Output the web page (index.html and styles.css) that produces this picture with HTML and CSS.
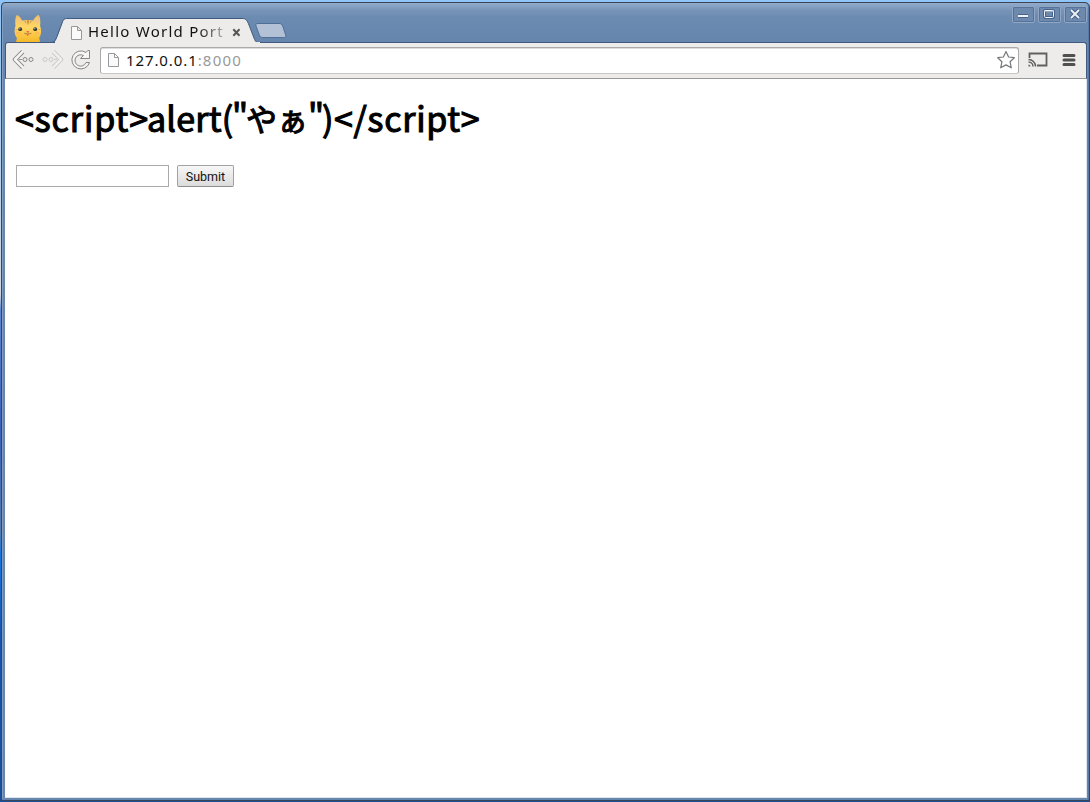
FILE: index.html
```html
<!DOCTYPE html>
<html lang="ja">
<head>
<meta charset="utf-8">
<title>Hello World Portal</title>
<link rel="stylesheet" href="styles.css">
</head>
<body>
<div class="window">
  <header class="titlebar">
    <svg class="cat" width="28" height="28" viewBox="0 0 28 28">
      <defs><linearGradient id="fur" x2="0" y2="1"><stop stop-color="#efbd68"/><stop offset=".45" stop-color="#ffd765"/><stop offset="1" stop-color="#f5b928"/></linearGradient></defs>
      <path d="M1.500 12C1 7 1.400 2.500 2.800 1c2 .2 4.200 3.300 5.400 5.500 3-.8 8-.8 11 0C20.500 4 22.700 1.200 24.700 1c1.700 2 1.900 7 1.400 11 1.700 4.500 1.200 9-1 12l1 4H2l1-4C.2 20.500.1 16 1.500 12z" fill="url(#fur)"/>
      <path d="M3 3l4 4-4 2zM24.500 3l-4.500 4 4.500 2z" fill="#f4c38a"/>
      <path d="M10.500 7h1l1 3zM13 6.500h2l-1 5zM17.500 7h-1l-1 3z" fill="#bd7e2e"/>
      <path d="M1.500 15l2.500.5-2.500.5zM26.300 15l-2.500.5 2.500.5z" fill="#d79a3b"/>
      <ellipse cx="4.200" cy="19" rx="2.300" ry="1.300" fill="#ffb95b"/><ellipse cx="23" cy="19" rx="2.300" ry="1.300" fill="#ffb95b"/>
      <circle cx="6.200" cy="15.200" r="1.900" fill="#303235"/><circle cx="21.200" cy="15.200" r="1.900" fill="#303235"/>
      <circle cx="5.800" cy="14.700" r=".6" fill="#d5dadd"/><circle cx="20.800" cy="14.700" r=".6" fill="#d5dadd"/>
      <path d="M12.200 17h3.200l-1.600 1.700z" fill="#f26268"/><path d="M10.300 19.200c1.400 1 2.700.6 3.500-.5 1 1.100 2.300 1.500 3.500.5" fill="none" stroke="#9c5d28" stroke-width=".8"/><ellipse cx="13.700" cy="20.800" rx="1" ry="1.100" fill="#e9685c"/>
    </svg>
    <div class="tab">
      <svg class="tab-shape" width="210" height="26" viewBox="0 0 210 26"><path class="tab-fill" d="M0 26C4 25 4.500 23 6 19.500L11 6C12.500 2 13 .5 17 .5H191C195 .5 196 2 198 7l5 13c1.500 4 2 5 7 6z"/><path class="tab-edge" d="M0 24.500C4 24 4.500 22 6 18.500L11 5C12.500 1 13 .5 17 .5H191C195 .5 196 2 198 7l5 13c1.500 4 2 4.500 7 4.500"/></svg>
      <div class="tab-content">
        <svg class="page" width="13" height="16" viewBox="0 0 13 16"><path d="M1.500 1.500h6l4 4v9h-10z M7.500 1.500v4h4"/></svg>
        <span class="tab-title">Hello World Port</span>
        <svg class="tab-close" width="9" height="9" viewBox="0 0 9 9"><path d="M1.300 1.300l6.200 6.400M7.500 1.300L1.300 7.700"/></svg>
      </div>
    </div>
    <svg class="newtab" width="34" height="18" viewBox="0 0 34 18"><path d="M4 1.500h21c2 0 3 1 3.700 2.500l3 9c.7 2-.1 2.500-2 2.500H9c-2 0-3-.8-3.700-2.500L2 4c-.7-2 .2-2.500 2-2.500z"/></svg>
    <div class="controls">
      <span class="control"><svg width="22" height="16" viewBox="0 0 22 16"><path d="M6 10h10" stroke-width="4"/><path class="mark" d="M6 10h10" stroke-width="2"/></svg></span>
      <span class="control"><svg width="22" height="16" viewBox="0 0 22 16"><rect x="6.500" y="4.500" width="9" height="7" rx="1" stroke-width="3"/><rect class="mark" x="6.500" y="4.500" width="9" height="7" rx="1"/><path class="mark" d="M6 5h10"/></svg></span>
      <span class="control"><svg width="22" height="16" viewBox="0 0 22 16"><path d="M7 4l8 8M15 4l-8 8" stroke-width="4"/><path class="mark" d="M7 4l8 8M15 4l-8 8" stroke-width="1.800"/></svg></span>
    </div>
  </header>
  <nav class="toolbar">
    <svg class="nav-icon back" width="24" height="24" viewBox="0 0 24 24"><g id="arrow" stroke-linejoin="round"><path d="M10.800 3.600L3 11.500l7.800 7.900" stroke="#868686" stroke-width="4.400"/><path d="M11 3.400L3 11.500l8 8.100" stroke="#f5f5f5" stroke-width="2.600"/><circle cx="13" cy="11.500" r="2" stroke="#888"/><circle cx="19" cy="11.500" r="2" stroke="#888"/><path d="M7 11.500h3" stroke="#999"/></g></svg>
    <svg class="nav-icon forward" width="24" height="24" viewBox="0 0 24 24"><use href="#arrow" transform="matrix(-1 0 0 1 24 0)"/></svg>
    <svg class="nav-icon reload" width="24" height="24" viewBox="0 0 24 24"><path d="M17 4.500A9 9 0 1 0 20.500 14.500H17A5.700 5.700 0 1 1 14.500 7.500l-3 3h9v-8h-1.800z" fill="#f5f5f5" stroke="#868686"/></svg>
    <div class="omnibox">
      <svg class="page" width="13" height="16" viewBox="0 0 13 16"><path d="M1.500 1.500h6l4 4v9h-10z M7.500 1.500v4h4"/></svg>
      <span class="url">127.0.0.1<span class="port">:8000</span></span>
      <svg class="star" width="20" height="20" viewBox="0 0 20 20"><path stroke-linejoin="round" stroke-width="1.200" d="M10 1.500l2.600 5.500 5.700.7-4.200 4.100 1.200 6-5.300-2.900-5.300 2.900 1.200-6-4.200-4.100 5.700-.7z"/></svg>
    </div>
    <svg class="cast" width="20" height="16" viewBox="0 0 20 16"><path d="M1.500 6V1.500h17v12H9" stroke-width="1.800"/><path d="M.5 7.500a7 7 0 0 1 7 7M.5 10A4.500 4.500 0 0 1 5 14.500" stroke-width="1.500"/><path d="M.5 12.500a2 2 0 0 1 2 2h-2z" fill="#606060" stroke="none"/></svg>
    <svg class="menu" width="14" height="14" viewBox="0 0 14 14"><path d="M2 2.500h10M2 7h10M2 11.500h10"/></svg>
  </nav>
  <main class="content">
    <h1><span class="open-tag">&lt;script&gt;</span><span class="call">alert(</span><span class="quote">"</span><span class="kana">やぁ</span><span class="quote">"</span><span class="paren">)</span><span class="close-tag">&lt;/script&gt;</span></h1>
    <form class="form"><input class="field" type="text"><button class="submit" type="button">Submit</button></form>
  </main>
</div>
</body>
</html>
```
FILE: styles.css
```css
* { box-sizing: border-box; }
body {
  margin: 0;
  width: 1090px;
  height: 802px;
  overflow: hidden;
  padding: 2px 0 1px 1px;
  background: linear-gradient(#8fc5f9 0, #a9cdef 120px, #d1d7df 294px, #5e86d1 310px, #3a60bb 430px, #567caf 530px, #1875df 555px, #1754ac 640px, #194f98 802px);
}
svg { display: block; flex: none; fill: none; }
.window {
  width: 1089px;
  height: 799px;
  display: flex;
  flex-direction: column;
  padding: 0 2px 2px 3px;
  border: 1px solid #3a4655;
  border-radius: 4px 5px 2px 2px;
  background: linear-gradient(#93acca 0, #7894b8 7px, #6c8bb1 14px, #6786ae 38px, #6786ae);
  box-shadow: inset 1px 0 #819dbf, inset -1px 0 #5779a5;
}
.titlebar { height: 39px; display: flex; align-items: flex-start; flex: none; }
.cat { margin: 11px 0 0 9px; }
.tab { position: relative; width: 210px; height: 26px; margin: 15px 0 0 9px; }
.tab-shape { position: absolute; left: 0; top: 0; }
.tab-fill { fill: #edecea; }
.tab-edge { stroke: #405b7f; stroke-width: 1; }
.tab-content { position: relative; height: 26px; display: flex; align-items: center; padding: 3px 0 0 19px; }
.page path { fill: #fafafa; stroke: #999; }
.tab-title {
  width: 139px;
  margin: -3px 0 0 5px;
  font: 15px/20px "Noto Sans", sans-serif;
  letter-spacing: 1.250px;
  white-space: nowrap;
  overflow: hidden;
  background: linear-gradient(90deg, #111 110px, #bbb 138px);
  background-clip: text;
  color: transparent;
}
.tab-close { margin-left: 5px; stroke: #555; stroke-width: 2; }
.newtab { margin: 19px 0 0 -7px; fill: #b2c1d6; stroke: #506f98; }
.controls { margin: 3px 0 0 auto; display: flex; gap: 3px; }
.control { width: 23px; height: 17px; border: 1px solid #91a7c4; border-radius: 2px; background: #6d89ae; box-shadow: inset 0 0 0 1px #53729c; }
.control svg { margin: -1px 0 0 -1px; stroke: #47648b; }
.control .mark { stroke: #eef2f7; }
.toolbar {
  position: relative;
  height: 37px;
  flex: none;
  display: flex;
  align-items: center;
  padding: 0 9px 1px 6px;
  background: #edecea;
  border: 1px solid #405b7f;
  border-bottom: 1px solid #999;
  border-radius: 3px 3px 0 0;
}
.toolbar::before { content: ""; position: absolute; left: 49px; top: -1px; width: 205px; height: 1px; background: #edecea; }
.forward { margin: 0 0 0 4px; opacity: .35; }
.reload { margin: 0 0 0 5px; }
.omnibox { display: flex; align-items: center; width: 919px; height: 27px; margin-left: 7px; padding: 0 2px 0 6px; background: #fff; border: 1px solid #aaa; border-bottom-color: #c7c7c7; border-radius: 3px; box-shadow: inset 0 1px #ddd; }
.url { margin: -1px 0 0 6px; font: 15px/20px "Noto Sans", sans-serif; letter-spacing: .900px; color: #111; white-space: nowrap; }
.port { color: #999; letter-spacing: 1.200px; }
.star { margin-left: auto; stroke: #777; }
.cast { margin-left: 9px; stroke: #606060; }
.menu { margin-left: 14px; stroke: #505050; stroke-width: 3; stroke-linecap: round; }
.content { flex: 1; padding: 17px 10px; background: #fff; border-right: 1px solid #dde5ef; border-bottom: 1px solid #dde5ef; }
h1 { display: flex; margin: 0; height: 44px; font: 400 34px/44px "Noto Sans CJK JP", sans-serif; color: #000; white-space: nowrap; -webkit-text-stroke: 1.100px #000; }
.open-tag { width: 132px; letter-spacing: .9px; }
.call { width: 85px; letter-spacing: .2px; }
.quote { width: 14px; letter-spacing: -2px; }
.kana { width: 62px; font-size: 31px; }
.paren { width: 12px; }
.close-tag { letter-spacing: .7px; }
.form { margin: 25px 0 0 1px; display: flex; gap: 8px; }
.field { width: 153px; height: 22px; border: 1px solid #a9a9a9; border-radius: 0; padding: 1px; background: #fff; outline: 0; }
.submit { width: 57px; height: 22px; padding: 1px 0 0; border: 1px solid #a2a2a2; border-bottom-color: #8e8e8e; border-radius: 2px; background: linear-gradient(#f7f7f7, #dcdcdc); font: 12.500px/18px Roboto, sans-serif; color: #111; }
```
